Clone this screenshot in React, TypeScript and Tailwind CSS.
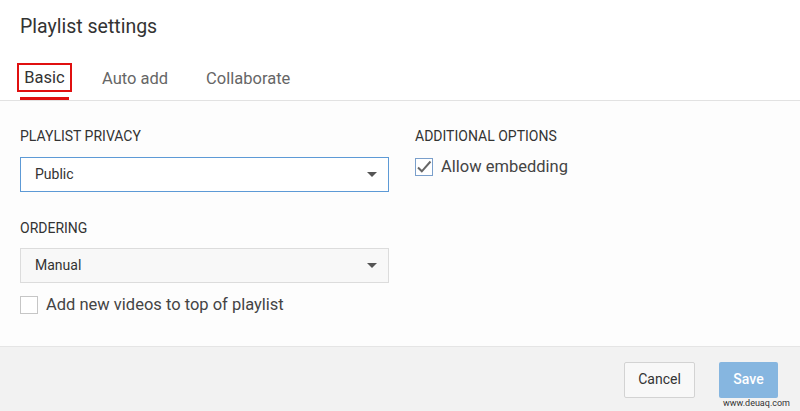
import React from 'react';

const Caret = () => (
  <svg width="10" height="5" viewBox="0 0 10 5" className="shrink-0">
    <path d="M0 0h10L5 5z" fill="#555" />
  </svg>
);

const Select = ({ value, focused }: { value: string; focused?: boolean }) => (
  <div
    className={`flex h-[35px] w-[369px] items-center justify-between pl-[14px] pr-[11px] text-[14px] text-[#333] ${
      focused ? 'border border-[#5d9ad6] bg-white' : 'border border-[#dcdcdc] bg-[#f8f8f8]'
    }`}
  >
    <span>{value}</span>
    <Caret />
  </div>
);

const Checkbox = ({ checked, label }: { checked?: boolean; label: string }) => (
  <label className="flex items-center gap-[8px] text-[16.5px] leading-[20px] text-[#444]">
    <span
      className={`flex h-[18px] w-[18px] shrink-0 items-center justify-center border bg-white ${
        checked ? 'border-[#7a9fcb]' : 'border-[#c6c6c6]'
      }`}
    >
      {checked && (
        <svg width="16" height="14" viewBox="0 0 16 14">
          <path d="M2 7.5l3.8 3.8L14.5 1.5" fill="none" stroke="#666" strokeWidth="2" />
        </svg>
      )}
    </span>
    {label}
  </label>
);

export default function App() {
  return (
    <div
      className="flex h-[411px] w-[800px] flex-col overflow-hidden bg-white"
      style={{ fontFamily: 'Roboto, "Liberation Sans", sans-serif' }}
    >
      <div className="px-[20px] pt-[15px] text-[19.5px] leading-[24px] text-[#333]">Playlist settings</div>

      <div className="mt-[24px] flex items-end border-b border-[#e2e2e2] pl-[17px] text-[16.5px] text-[#666]">
        <div className="flex flex-col items-center">
          <div className="flex h-[29px] w-[55px] items-center justify-center border-2 border-[#e01010] pt-[2px] text-[#333]">
            Basic
          </div>
          <div className="mt-[5px] h-[3px] w-[49px] bg-[#e01010]" />
        </div>
        <div className="mb-[11px] ml-[30px] leading-[20px]">Auto add</div>
        <div className="mb-[11px] ml-[38px] leading-[20px]">Collaborate</div>
      </div>

      <div className="flex flex-1 bg-[#fdfdfd] px-[20px] pt-[27px]">
        <div className="flex w-[395px] flex-col">
          <div className="text-[14px] leading-[16px] text-[#333]">PLAYLIST PRIVACY</div>
          <div className="mt-[13px]">
            <Select value="Public" focused />
          </div>
          <div className="mt-[28px] text-[14px] leading-[16px] text-[#333]">ORDERING</div>
          <div className="mt-[12px]">
            <Select value="Manual" />
          </div>
          <div className="mt-[12px]">
            <Checkbox label="Add new videos to top of playlist" />
          </div>
        </div>
        <div className="flex flex-col">
          <div className="text-[14px] leading-[16px] text-[#333]">ADDITIONAL OPTIONS</div>
          <div className="mt-[13px]">
            <Checkbox checked label="Allow embedding" />
          </div>
        </div>
      </div>

      <div className="relative flex h-[65px] items-center justify-end gap-[24px] border-t border-[#e5e5e5] bg-[#f2f2f2] pr-[22px] pt-[1px]">
        <button className="h-[36px] w-[71px] rounded-[2px] border border-[#d3d3d3] bg-[#f8f8f8] text-[14px] text-[#333]">
          Cancel
        </button>
        <button className="h-[36px] w-[59px] rounded-[2px] bg-[#86b6e0] text-[14px] font-medium text-white">
          Save
        </button>
        <span className="absolute bottom-[3px] right-[10px] text-[9px] leading-[10px] text-[#333]">www.deuaq.com</span>
      </div>
    </div>
  );
}
